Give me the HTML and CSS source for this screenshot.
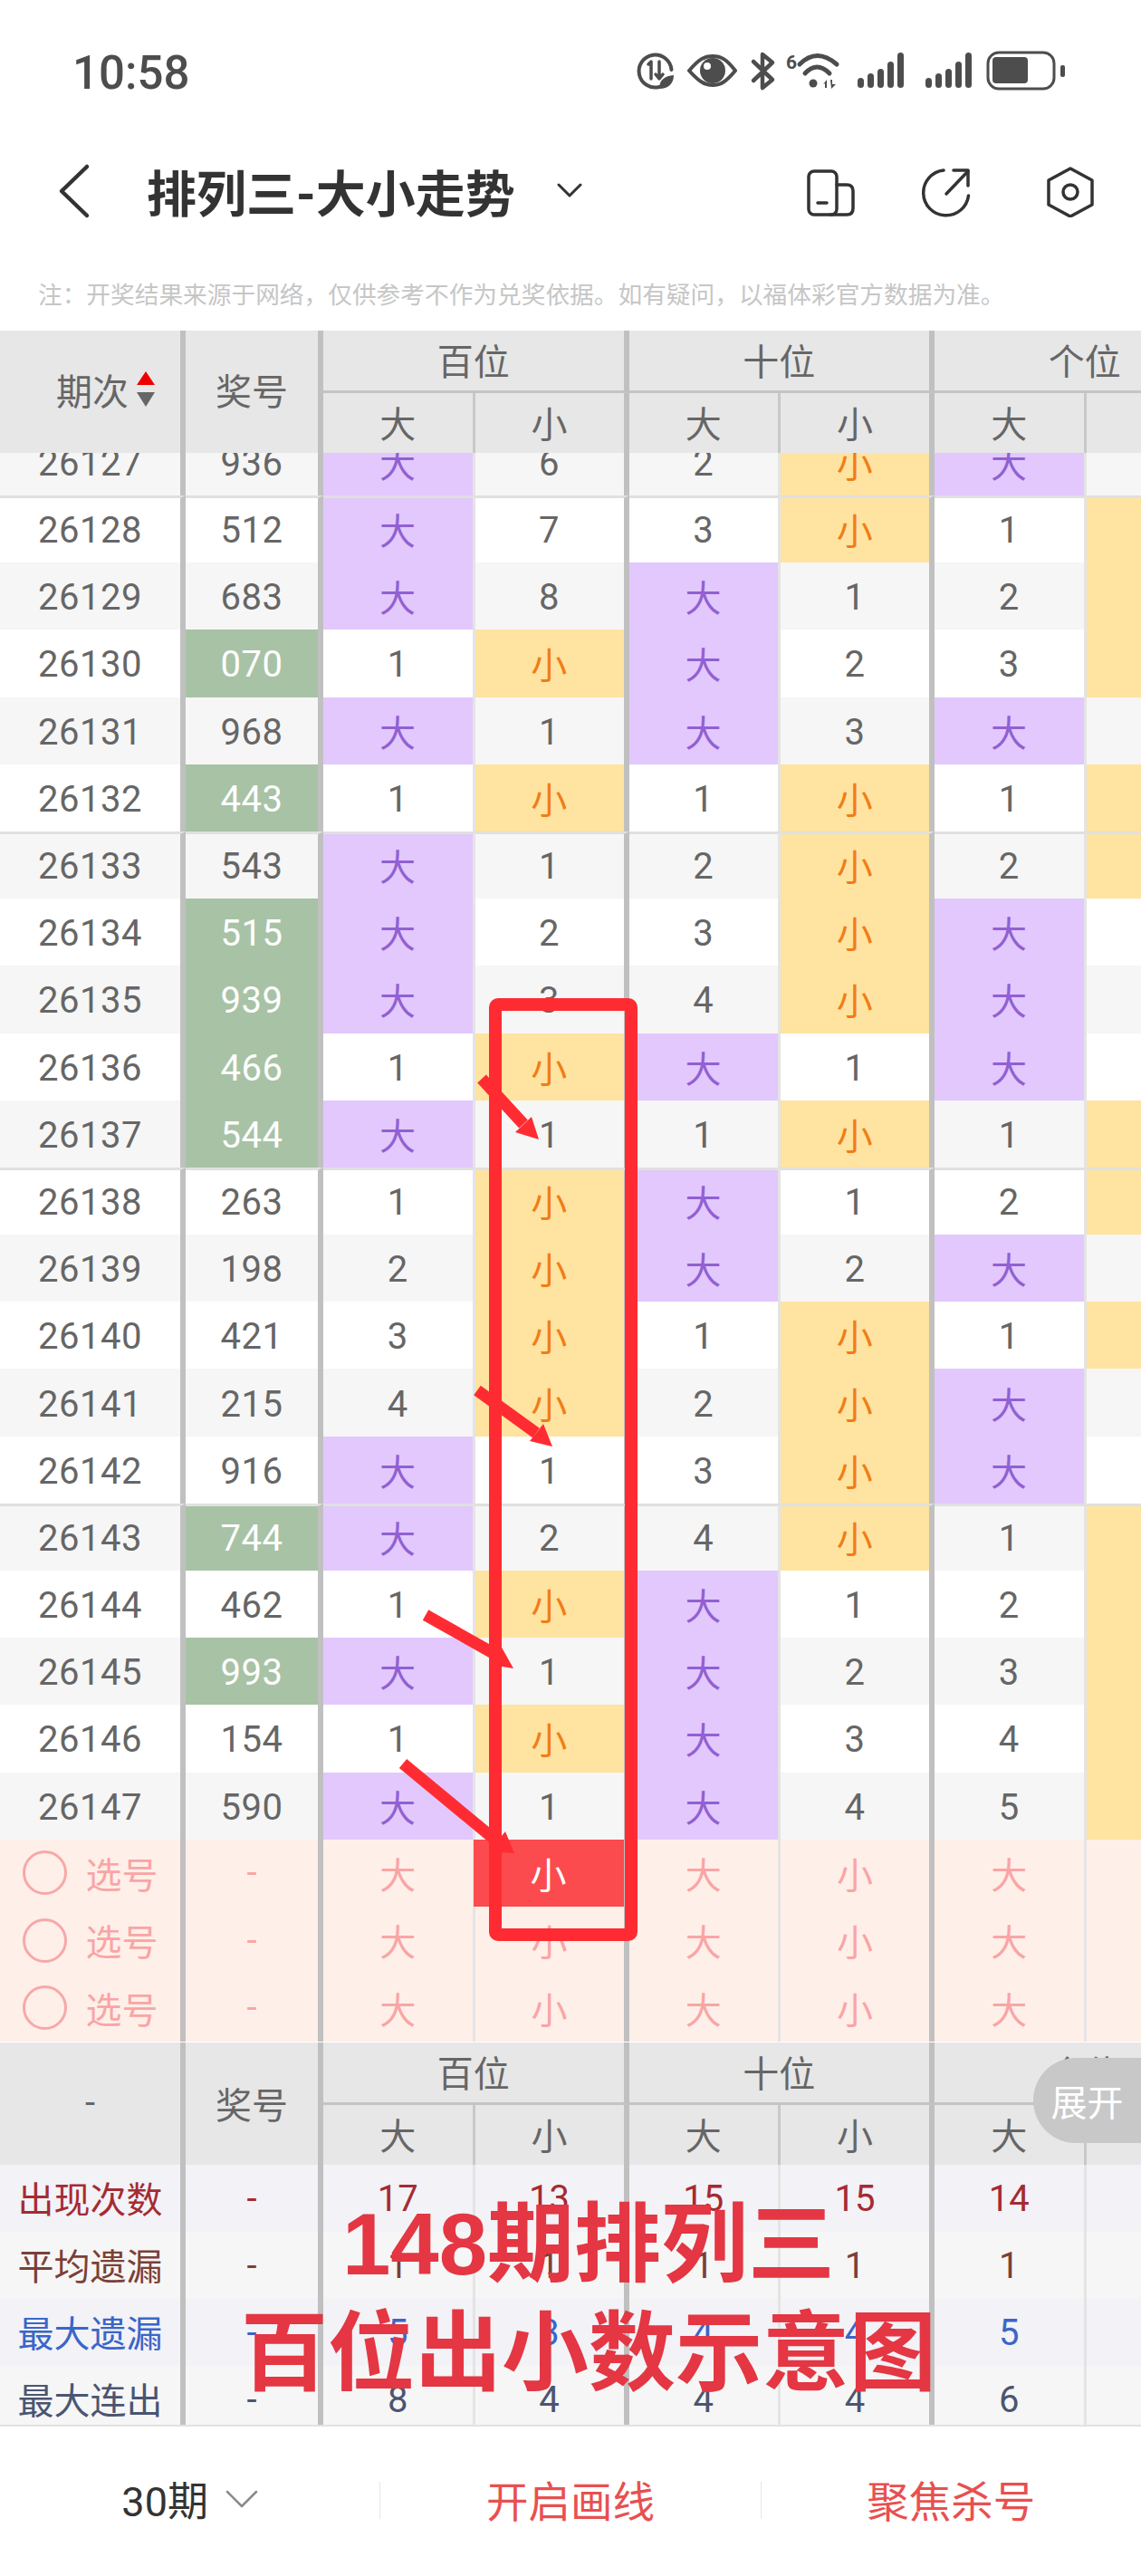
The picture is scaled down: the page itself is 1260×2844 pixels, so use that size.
FILE: index.html
```html
<!DOCTYPE html>
<html lang="zh-CN">
<head>
  <meta charset="UTF-8">
  <meta name="viewport" content="width=device-width, initial-scale=1.0">
  <title>排列三-大小走势</title>
  <link rel="stylesheet" href="styles.css">
</head>
<body>
<div class="page">

  <div class="status">
    <span class="time">10:58</span>
    <svg class="status-icons" width="500" height="70" viewBox="0 0 500 70">
      <g fill="none" stroke="#4d4d4d" stroke-width="4" stroke-linecap="round" stroke-linejoin="round">
        <path d="M38 51 A18 18 0 1 1 51.500 32"/>
        <path d="M26 26 L29 23 V42 M38 23 V41 M34 37 L38 42 L42 37" stroke-width="3.500"/>
        <path d="M71 33 C82 20 88 17 97 17 C106 17 112 20 122 33 C112 45 106 49 97 49 C88 49 82 45 71 33 Z"/>
        <path d="M142 23 L163 43 L152 52 V15 L163 24 L142 44" stroke-width="4.500"/>
        <path d="M193 26 Q212 7 234 26" stroke-width="5"/>
        <path d="M199 36 Q212 22 226 36" stroke-width="5"/>
      </g>
      <g fill="#4d4d4d">
        <path d="M38 53 C38 43 44 39 54 38 C54 47 48 53 38 53 Z"/>
        <circle cx="97" cy="33" r="14"/>
        <text class="wifi-six" x="178" y="31">6</text>
        <circle cx="208" cy="47" r="4.500"/>
        <path d="M219 48 L223 43 V52 H221 V47 Z M227 43 H229 V48 L233 48 L228 53 Z"/>
        <rect x="257" y="41" width="7" height="11" rx="3.500"/>
        <rect x="268" y="36" width="7" height="16" rx="3.500"/>
        <rect x="279" y="31" width="7" height="21" rx="3.500"/>
        <rect x="290" y="23" width="7" height="29" rx="3.500"/>
        <rect x="301" y="13" width="7" height="39" rx="3.500"/>
        <rect x="332" y="41" width="7" height="11" rx="3.500"/>
        <rect x="343" y="36" width="7" height="16" rx="3.500"/>
        <rect x="354" y="31" width="7" height="21" rx="3.500"/>
        <rect x="365" y="23" width="7" height="29" rx="3.500"/>
        <rect x="376" y="13" width="7" height="39" rx="3.500"/>
        <rect x="406" y="18" width="39" height="29" rx="4"/>
        <rect x="481" y="27" width="5" height="13" rx="2"/>
      </g>
      <circle cx="91" cy="28" r="4" fill="#fff"/>
      <rect x="401" y="13" width="73" height="40" rx="12" fill="none" stroke="#4d4d4d" stroke-width="3"/>
    </svg>
  </div>

  <div class="nav">
    <svg class="back" width="44" height="64" viewBox="0 0 44 64">
      <path d="M36 6 L8 33 L36 60" fill="none" stroke="#333" stroke-width="4.500" stroke-linecap="round" stroke-linejoin="round"/>
    </svg>
    <h1 class="title">排列三-大小走势</h1>
    <svg class="title-arrow" width="28" height="16" viewBox="0 0 28 16">
      <path d="M2 2 L14 14 L26 2" fill="none" stroke="#333" stroke-width="3" stroke-linecap="round" stroke-linejoin="round"/>
    </svg>
    <div class="nav-icons">
      <svg width="60" height="60" viewBox="0 0 60 60">
        <g fill="none" stroke="#333" stroke-width="3.500" stroke-linecap="round" stroke-linejoin="round">
          <rect x="6" y="9" width="31" height="48" rx="6"/>
          <path d="M37 24 H48 Q55 24 55 31 V50 Q55 57 48 57 H30"/>
          <path d="M16 44 H26"/>
        </g>
      </svg>
      <svg width="60" height="60" viewBox="0 0 60 60">
        <g fill="none" stroke="#333" stroke-width="3.500" stroke-linecap="round" stroke-linejoin="round">
          <path d="M27 8 A25 25 0 1 0 54.500 36"/>
          <path d="M30 34 L54 9"/>
          <path d="M38 8 H54 V25"/>
        </g>
      </svg>
      <svg width="60" height="60" viewBox="0 0 60 60">
        <g fill="none" stroke="#333" stroke-width="3.500" stroke-linejoin="round">
          <path d="M30 6 L54 19 V46 L30 59 L6 46 V19 Z"/>
          <circle cx="30" cy="32" r="8"/>
        </g>
      </svg>
    </div>
  </div>

  <p class="note">注：开奖结果来源于网络，仅供参考不作为兑奖依据。如有疑问，以福体彩官方数据为准。</p>

  <div class="board">
    <div class="head">
      <div class="hcell hspan issue">期次<span class="sort"><i class="up"></i><i class="down"></i></span></div>
      <div class="hcell hspan">奖号</div>
      <div class="hcell group">百位</div>
      <div class="hcell group">十位</div>
      <div class="hcell group">个位</div>
      <div class="hcell sub">大</div><div class="hcell sub">小</div>
      <div class="hcell sub">大</div><div class="hcell sub">小</div>
      <div class="hcell sub">大</div><div class="hcell sub">小</div>
    </div>

    <div class="scroll">
      <div class="rows">
        <div class="row"><div>26127</div><div>936</div><div class="big">大</div><div>6</div><div>2</div><div class="small">小</div><div class="big">大</div><div>1</div></div>
        <div class="row sep"><div>26128</div><div>512</div><div class="big">大</div><div>7</div><div>3</div><div class="small">小</div><div>1</div><div class="small">小</div></div>
        <div class="row"><div>26129</div><div>683</div><div class="big">大</div><div>8</div><div class="big">大</div><div>1</div><div>2</div><div class="small">小</div></div>
        <div class="row"><div>26130</div><div class="pair">070</div><div>1</div><div class="small">小</div><div class="big">大</div><div>2</div><div>3</div><div class="small">小</div></div>
        <div class="row"><div>26131</div><div>968</div><div class="big">大</div><div>1</div><div class="big">大</div><div>3</div><div class="big">大</div><div>1</div></div>
        <div class="row"><div>26132</div><div class="pair">443</div><div>1</div><div class="small">小</div><div>1</div><div class="small">小</div><div>1</div><div class="small">小</div></div>
        <div class="row sep"><div>26133</div><div>543</div><div class="big">大</div><div>1</div><div>2</div><div class="small">小</div><div>2</div><div class="small">小</div></div>
        <div class="row"><div>26134</div><div class="pair">515</div><div class="big">大</div><div>2</div><div>3</div><div class="small">小</div><div class="big">大</div><div>1</div></div>
        <div class="row"><div>26135</div><div class="pair">939</div><div class="big">大</div><div>3</div><div>4</div><div class="small">小</div><div class="big">大</div><div>2</div></div>
        <div class="row"><div>26136</div><div class="pair">466</div><div>1</div><div class="small">小</div><div class="big">大</div><div>1</div><div class="big">大</div><div>3</div></div>
        <div class="row"><div>26137</div><div class="pair">544</div><div class="big">大</div><div>1</div><div>1</div><div class="small">小</div><div>1</div><div class="small">小</div></div>
        <div class="row sep"><div>26138</div><div>263</div><div>1</div><div class="small">小</div><div class="big">大</div><div>1</div><div>2</div><div class="small">小</div></div>
        <div class="row"><div>26139</div><div>198</div><div>2</div><div class="small">小</div><div class="big">大</div><div>2</div><div class="big">大</div><div>1</div></div>
        <div class="row"><div>26140</div><div>421</div><div>3</div><div class="small">小</div><div>1</div><div class="small">小</div><div>1</div><div class="small">小</div></div>
        <div class="row"><div>26141</div><div>215</div><div>4</div><div class="small">小</div><div>2</div><div class="small">小</div><div class="big">大</div><div>1</div></div>
        <div class="row"><div>26142</div><div>916</div><div class="big">大</div><div>1</div><div>3</div><div class="small">小</div><div class="big">大</div><div>2</div></div>
        <div class="row sep"><div>26143</div><div class="pair">744</div><div class="big">大</div><div>2</div><div>4</div><div class="small">小</div><div>1</div><div class="small">小</div></div>
        <div class="row"><div>26144</div><div>462</div><div>1</div><div class="small">小</div><div class="big">大</div><div>1</div><div>2</div><div class="small">小</div></div>
        <div class="row"><div>26145</div><div class="pair">993</div><div class="big">大</div><div>1</div><div class="big">大</div><div>2</div><div>3</div><div class="small">小</div></div>
        <div class="row"><div>26146</div><div>154</div><div>1</div><div class="small">小</div><div class="big">大</div><div>3</div><div>4</div><div class="small">小</div></div>
        <div class="row"><div>26147</div><div>590</div><div class="big">大</div><div>1</div><div class="big">大</div><div>4</div><div>5</div><div class="small">小</div></div>
      </div>
      <div class="row pick"><div><span class="radio"></span>选号</div><div>-</div><div>大</div><div class="picked">小</div><div>大</div><div>小</div><div>大</div><div>小</div></div>
      <div class="row pick"><div><span class="radio"></span>选号</div><div>-</div><div>大</div><div>小</div><div>大</div><div>小</div><div>大</div><div>小</div></div>
      <div class="row pick"><div><span class="radio"></span>选号</div><div>-</div><div>大</div><div>小</div><div>大</div><div>小</div><div>大</div><div>小</div></div>
    </div>

    <div class="head">
      <div class="hcell hspan">-</div>
      <div class="hcell hspan">奖号</div>
      <div class="hcell group">百位</div>
      <div class="hcell group">十位</div>
      <div class="hcell group">个位</div>
      <div class="hcell sub">大</div><div class="hcell sub">小</div>
      <div class="hcell sub">大</div><div class="hcell sub">小</div>
      <div class="hcell sub">大</div><div class="hcell sub">小</div>
    </div>

    <div class="row stat times"><div>出现次数</div><div>-</div><div>17</div><div>13</div><div>15</div><div>15</div><div>14</div><div>16</div></div>
    <div class="row stat avg"><div>平均遗漏</div><div>-</div><div>1</div><div>1</div><div>1</div><div>1</div><div>1</div><div>1</div></div>
    <div class="row stat miss"><div>最大遗漏</div><div>-</div><div>5</div><div>3</div><div>4</div><div>4</div><div>5</div><div>3</div></div>
    <div class="row stat streak"><div>最大连出</div><div>-</div><div>8</div><div>4</div><div>4</div><div>4</div><div>6</div><div>5</div></div>
  </div>

  <div class="toolbar">
    <div class="tool period">30期
      <svg width="36" height="20" viewBox="0 0 36 20">
        <path d="M2 2 L18 18 L34 2" fill="none" stroke="#8a8a8a" stroke-width="2.500" stroke-linecap="round" stroke-linejoin="round"/>
      </svg>
    </div>
    <span class="divider"></span>
    <div class="tool action">开启画线</div>
    <span class="divider"></span>
    <div class="tool action">聚焦杀号</div>
  </div>

  <!-- hand drawn marks on top of the chart -->
  <svg class="marks" width="1260" height="2844" viewBox="0 0 1260 2844">
    <rect x="547" y="1109" width="150" height="1027" rx="3" fill="none" stroke="#fe2c32" stroke-width="14"/>
    <g stroke="#fe2c32" stroke-width="13" fill="none">
      <path d="M532 1191 L578 1241"/>
      <path d="M527 1535 L592 1582"/>
      <path d="M470 1783 L548 1827"/>
      <path d="M445 1947 L549 2033"/>
    </g>
    <g fill="#fe2c32">
      <path d="M569 1250 L587 1233 L595 1258 Z"/>
      <path d="M585 1591 L600 1572 L610 1597 Z"/>
      <path d="M553 1817 L543 1838 L567 1842 Z"/>
      <path d="M558 2022 L540 2044 L568 2046 Z"/>
    </g>
  </svg>

  <div class="expand">展开</div>

  <div class="caption">
    <div>148期排列三</div>
    <div>百位出小数示意图</div>
  </div>
</div>
</body>
</html>
```

FILE: styles.css
```css
body {
  margin: 0;
  background: #fff;
  font-family: Roboto, "Noto Sans CJK SC", sans-serif;
  color: #666;
}
.page {
  position: relative;
  width: 1260px;
  height: 2844px;
  overflow: hidden;
}

/* status bar */
.status {
  display: flex;
  justify-content: space-between;
  align-items: center;
  height: 160px;
  padding: 0 70px 0 80px;
}
.time {
  font-size: 51px;
  font-weight: 500;
  color: #4d4d4d;
}
.wifi-six {
  font-size: 21px;
  font-weight: 700;
  font-family: Roboto, sans-serif;
}

/* title bar */
.nav {
  display: flex;
  align-items: center;
  height: 100px;
  padding: 0 22px 0 60px;
}
.title {
  margin: 0 0 0 58px;
  font-size: 55px;
  font-weight: 700;
  color: #333;
  white-space: nowrap;
}
.title-arrow {
  margin-left: 46px;
}
.nav-icons {
  display: flex;
  margin-left: auto;
  gap: 68px;
}
.nav-icons svg:last-child {
  margin-left: 9px;
  margin-right: 26px;
}
.note {
  height: 77px;
  margin: 0;
  padding-top: 28px;
  padding-left: 42px;
  font-size: 26.7px;
  line-height: 77px;
  color: #c6c6c6;
  white-space: nowrap;
}

/* chart */
.board {
  --cols: 205px 152px 167.5px 170px 167.5px 170px 167.5px 170px;
  height: 2312px;
  overflow: hidden;
  font-size: 40px;
}
.head {
  display: grid;
  grid-template-columns: var(--cols);
  grid-template-rows: 69px 66px;
  width: 1369.5px;
  background: #e7e7e7;
}
.hcell {
  display: flex;
  justify-content: center;
  align-items: center;
  box-sizing: border-box;
  border-right: 6px solid #c0c0c0;
}
.hspan {
  grid-row: span 2;
  padding-bottom: 2px;
}
.head:first-child .hspan {
  padding-bottom: 6px;
}
.group {
  grid-column: span 2;
  padding-bottom: 2px;
  border-bottom: 3px solid #c4c4c4;
}
.sub {
  padding-bottom: 2px;
}
.sub:nth-child(even) {
  border-right: 3px solid #c8c8c8;
}
.issue {
  justify-content: flex-start;
  padding-left: 62px;
}
.sort {
  display: flex;
  flex-direction: column;
  gap: 8px;
  margin-left: 9px;
}
.sort i {
  display: block;
  width: 0;
  height: 0;
  border-left: 10px solid transparent;
  border-right: 10px solid transparent;
}
.sort .up {
  border-bottom: 15px solid #ef0000;
}
.sort .down {
  border-top: 16px solid #666;
}

.scroll {
  height: 1755px;
  overflow: hidden;
}
.rows {
  margin-top: -27.2px;
}
.row {
  display: grid;
  grid-template-columns: var(--cols);
  width: 1369.5px;
  height: 74.2px;
  background: #fff;
}
.rows .row:nth-child(odd) {
  background: #f6f6f6;
}
.row > div {
  display: flex;
  justify-content: center;
  align-items: center;
  box-sizing: border-box;
  border-right: 6px solid #c0c0c0;
}
.rows .row > div {
  padding-top: 3px;
  letter-spacing: 0.5px;
}
.row > div:nth-child(odd):nth-child(n+3) {
  border-right: 3px solid #e4e4e4;
}
.rows .row.sep > div {
  padding-top: 0;
  border-top: 3px solid #e0e0e0;
}
.row .big {
  background: #e2c8fd;
  color: #9160d2;
}
.row .small {
  background: #ffe3a0;
  color: #f07d17;
}
.row .pair {
  background: #a8c2a5;
  color: #fff;
}
/* the CJK marks sit a little lower than the digits */
.rows .row > .big, .rows .row > .small {
  padding-top: 0;
}
.rows .row.sep > .big, .rows .row.sep > .small {
  padding-bottom: 3px;
}

/* number picker rows */
.row.pick {
  height: 74.4px;
  background: #ffefe9;
  color: #f9a5a5;
}
.row.pick > div:first-child {
  gap: 21px;
}
.radio {
  box-sizing: border-box;
  width: 49px;
  height: 49px;
  border: 3px solid #f7a8a8;
  border-radius: 50%;
}
.row.pick .picked {
  margin-left: -2px;
  background: #fb4b4e;
  color: #fff;
}

/* stats */
.row.stat {
  height: 74px;
}
.row.stat > div:first-child {
  padding-bottom: 3px;
}
.stat.times, .stat.miss {
  background: #f2f2f7;
}
.stat.avg, .stat.streak {
  background: #f6f6f6;
}
.stat.times { color: #a52b32; }
.stat.avg { color: #7a4038; }
.stat.miss { color: #3a66c8; }
.stat.streak { color: #4a5572; }

/* bottom bar */
.toolbar {
  display: flex;
  align-items: center;
  height: 163px;
  border-top: 2px solid #e2e2e2;
}
.tool {
  display: flex;
  flex: 1;
  justify-content: center;
  align-items: center;
  padding-bottom: 4px;
}
.period {
  gap: 19px;
  font-size: 45px;
  color: #333;
}
.action {
  font-size: 46.5px;
  color: #e85050;
}
.divider {
  width: 1px;
  height: 41px;
  background: #e6e6e6;
}

/* overlays */
.marks {
  position: absolute;
  top: 0;
  left: 0;
}
.expand {
  position: absolute;
  top: 2272px;
  right: 0;
  display: flex;
  align-items: center;
  justify-content: center;
  width: 119px;
  height: 94px;
  border-radius: 47px 0 0 47px;
  background: #c8c8c8;
  color: #fff;
  font-size: 40px;
}
.caption {
  position: absolute;
  top: 2418px;
  left: 0;
  width: 1300px;
  font-family: "Liberation Sans", "Noto Sans CJK SC", sans-serif;
  font-size: 96px;
  font-weight: 700;
  line-height: 120px;
  text-align: center;
  color: #e43643;
}
```
